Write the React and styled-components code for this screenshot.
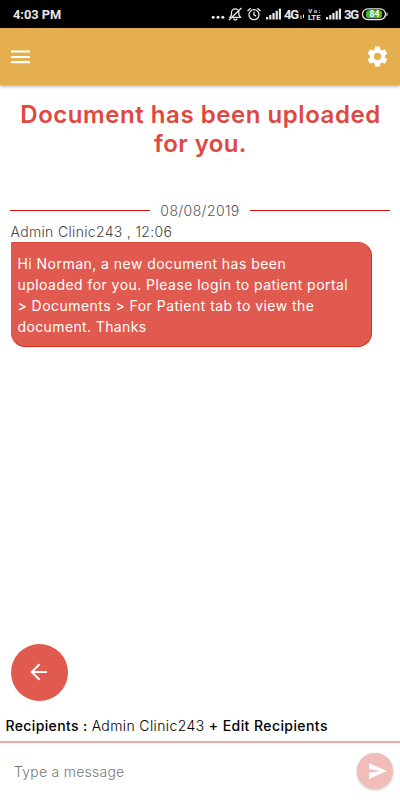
import React from 'react';
import styled, { createGlobalStyle } from 'styled-components';

const Global = createGlobalStyle`
  * { box-sizing: border-box; }
  body { margin: 0; background: #fff; font-family: Inter, "Open Sans", sans-serif; }
`;
const Screen = styled.div`
  width: 400px; height: 800px; display: flex; flex-direction: column; overflow: hidden; background: #fff;
`;
const StatusBar = styled.div`
  height: 28px; flex: none; background: #000; color: #e8e8e8; padding: 0 12px 0 13px;
  display: flex; align-items: center; justify-content: space-between;
  font: 700 12.8px/28px Roboto, sans-serif;
  svg { display: block; }
`;
const Clock = styled.span`
  padding-top: 2px; line-height: 26px;
`;
const AppBar = styled.header`
  height: 57px; flex: none; background: #e5af4f; padding: 0 10px;
  display: flex; align-items: center; justify-content: space-between;
  box-shadow: 0 1px 4px rgba(0, 0, 0, 0.4);
`;
const IconButton = styled.button`
  border: 0; padding: 0; background: none; color: #fff; display: flex;
  svg { display: block; }
`;
const Line = styled.span`
  display: block; white-space: pre; letter-spacing: ${(p) => p.$track}px;
`;
const Run = styled.span`
  letter-spacing: ${(p) => p.$track}px; font-weight: ${(p) => (p.$strong ? 500 : 300)};
`;
const Title = styled.h1`
  margin: 15px 0 0 1px; color: #e0483f; font-size: 24px; line-height: 29px; font-weight: 600;
  text-align: center;
`;
const Conversation = styled.main`
  flex: 1; display: flex; flex-direction: column;
`;
const DateDivider = styled.div`
  margin: 42px 10px 0; height: 20px; display: flex; align-items: center; gap: 10px;
  color: #555; font-size: 14px; font-weight: 300;
  &::before, &::after { content: ""; flex: 1; height: 1px; background: #d5120c; }
`;
const Sender = styled.div`
  margin: 1px 0 0 10.5px; height: 21px; line-height: 21px; color: #444; font-size: 14px; font-weight: 300;
`;
const Bubble = styled.div`
  margin-left: 10.5px; width: 361px; height: 105px; padding: 10px 6px;
  background: #e05a50; border: 1px solid #de2c17; border-top-color: #e04a40; border-left-color: #e0544a;
  border-radius: 0 14px 14px 14px;
  color: #fff; font-size: 14px; line-height: 21px; font-weight: 400;
`;
const BackButton = styled.button`
  margin: auto 0 8.5px 10.5px; width: 57px; height: 57px; border: 0; border-radius: 50%; padding: 0;
  background: #e05a50; color: #fff; display: flex; align-items: center; justify-content: center;
`;
const Recipients = styled.div`
  height: 32px; flex: none; padding: 1px 0 0 5.5px; font-size: 14px; line-height: 32px; color: #000; white-space: pre;
`;
const Composer = styled.footer`
  height: 59px; flex: none; border-top: 2px solid #eeaaa6; padding: 0 7px 0 14px;
  display: flex; align-items: center; justify-content: space-between;
  color: #777; font-size: 14px; font-weight: 300;
`;
const SendButton = styled.button`
  width: 36px; height: 36px; border: 0; border-radius: 50%; padding: 0 0 0 5px; margin-top: -2px;
  background: #f2bcb9; display: flex; align-items: center; justify-content: center;
  box-shadow: 0 1px 3px rgba(0, 0, 0, 0.25);
`;

const Signal = ({ x }) => (
  <g transform={`translate(${x} 0)`} fill="#e8e8e8">
    <rect x="0" y="17" width="2.2" height="2.500" />
    <rect x="3.200" y="15" width="2.200" height="4.500" />
    <rect x="6.400" y="13" width="2.200" height="6.500" />
    <rect x="9.600" y="10.800" width="2.200" height="8.700" />
    <rect x="12.800" y="8.600" width="2.200" height="10.900" />
  </g>
);

const StatusIcons = () => (
  <svg width="178" height="28" viewBox="210 0 178 28" fill="none" stroke="#e8e8e8" fontFamily="Roboto, sans-serif" fontWeight="700">
    <g fill="#e8e8e8" stroke="none">
      <circle cx="213.2" cy="17.3" r="1.5" />
      <circle cx="218" cy="17.3" r="1.5" />
      <circle cx="222.8" cy="17.3" r="1.5" />
    </g>
    <g strokeWidth="1.3">
      <path d="M230 17.300h10.500l-1.600-2.500V12.500a3.700 3.700 0 0 0-7.400 0v2.300zM233.500 18.500a1.800 1.800 0 0 0 3.500 0M241.500 8 229 20" />
      <circle cx="254" cy="14.700" r="5" />
      <path d="M254 11.800v3.100l2 1.200M247.500 11l3.200-2.800M260.500 11l-3.200-2.800" />
    </g>
    <g stroke="none"><Signal x={266} /><Signal x={326} /></g>
    <g fill="#e8e8e8" stroke="none">
      <text x="284" y="18.800" fontSize="13" textLength="15">4G</text>
      <path d="M300.500 15.500h1v3.500h-1zM303 14.500h1v3.500h-1z" />
      <text x="308.300" y="12.700" fontSize="6" textLength="12">Vo:</text>
      <text x="308" y="19.800" fontSize="6.300" textLength="12.500" lengthAdjust="spacingAndGlyphs">LTE</text>
      <text x="344" y="18.800" fontSize="13" textLength="15">3G</text>
    </g>
    <rect x="362.500" y="8.800" width="23" height="10.700" rx="5.300" strokeWidth="1.300" />
    <rect x="366" y="10.300" width="16" height="7.700" rx="2.500" fill="#43b91b" stroke="none" />
    <path d="M387 12.500v3.500" />
    <text x="369.500" y="17.200" fontSize="8.500" fill="#fff" stroke="none">84</text>
  </svg>
);

export default function App() {
  return (
    <>
      <Global />
      <Screen>
        <StatusBar><Clock>4:03 PM</Clock><StatusIcons /></StatusBar>
        <AppBar>
          <IconButton aria-label="Menu">
            <svg width="21" height="14" viewBox="0 0 21 14"><path d="M1 1.500h19M1 7h19M1 12.200h19" stroke="#fff" strokeWidth="2.200" /></svg>
          </IconButton>
          <IconButton aria-label="Settings">
            <svg width="25" height="25" viewBox="0 0 24 24" fill="#fff"><path d="M19.140 12.940c.04-.3.060-.610.060-.940 0-.320-.020-.640-.070-.940l2.030-1.580a.49.49 0 0 0 .12-.610l-1.920-3.320a.488.488 0 0 0-.590-.220l-2.390.96c-.5-.380-1.030-.7-1.620-.940l-.360-2.540a.484.484 0 0 0-.480-.410h-3.840c-.240 0-.430.170-.470.410l-.360 2.540c-.590.240-1.130.570-1.620.940l-2.390-.96c-.220-.080-.470 0-.590.220L2.740 8.870c-.120.210-.080.470.120.610l2.030 1.580c-.050.3-.090.630-.090.940s.020.640.070.940l-2.030 1.580a.49.49 0 0 0-.120.610l1.920 3.320c.120.220.370.290.590.220l2.390-.96c.5.380 1.030.7 1.620.940l.360 2.540c.050.240.240.410.480.410h3.840c.240 0 .440-.170.470-.410l.360-2.540c.590-.240 1.130-.560 1.620-.940l2.390.96c.220.080.470 0 .59-.220l1.920-3.320c.120-.220.070-.470-.120-.610l-2.010-1.580zM12 15.600c-1.980 0-3.600-1.620-3.600-3.600s1.620-3.600 3.600-3.600 3.600 1.620 3.600 3.600-1.620 3.600-3.600 3.600z" /></svg>
          </IconButton>
        </AppBar>
        <Conversation>
          <Title>
            <Line $track={0.55}>Document has been uploaded</Line>
            <Line $track={0.4}>for you.</Line>
          </Title>
          <DateDivider><Line $track={0.4}>08/08/2019</Line></DateDivider>
          <Sender><Line $track={0.33}>Admin Clinic243 , 12:06</Line></Sender>
          <Bubble>
            <Line $track={0.46}>Hi Norman, a new document has been</Line>
            <Line $track={0.45}>uploaded for you. Please login to patient portal</Line>
            <Line $track={0.46}>&gt; Documents &gt; For Patient tab to view the</Line>
            <Line $track={0.38}>document. Thanks</Line>
          </Bubble>
          <BackButton aria-label="Back">
            <svg width="18" height="18" viewBox="0 0 18 18" fill="none" stroke="#fff" strokeWidth="2"><path d="M17 9H2M9.500 1.300 1.800 9l7.700 7.700" /></svg>
          </BackButton>
        </Conversation>
        <Recipients>
          <Run $strong $track={0.36}>Recipients : </Run>
          <Run $track={0.38}>Admin Clinic243 </Run>
          <Run $strong $track={0.42}>+ Edit Recipients</Run>
        </Recipients>
        <Composer>
          <Line $track={0.25}>Type a message</Line>
          <SendButton aria-label="Send">
            <svg width="18" height="16" viewBox="0 0 18 16"><path d="M0 0 18 8 0 16V9.700L12 8 0 6.300z" fill="#fff" /></svg>
          </SendButton>
        </Composer>
      </Screen>
    </>
  );
}
